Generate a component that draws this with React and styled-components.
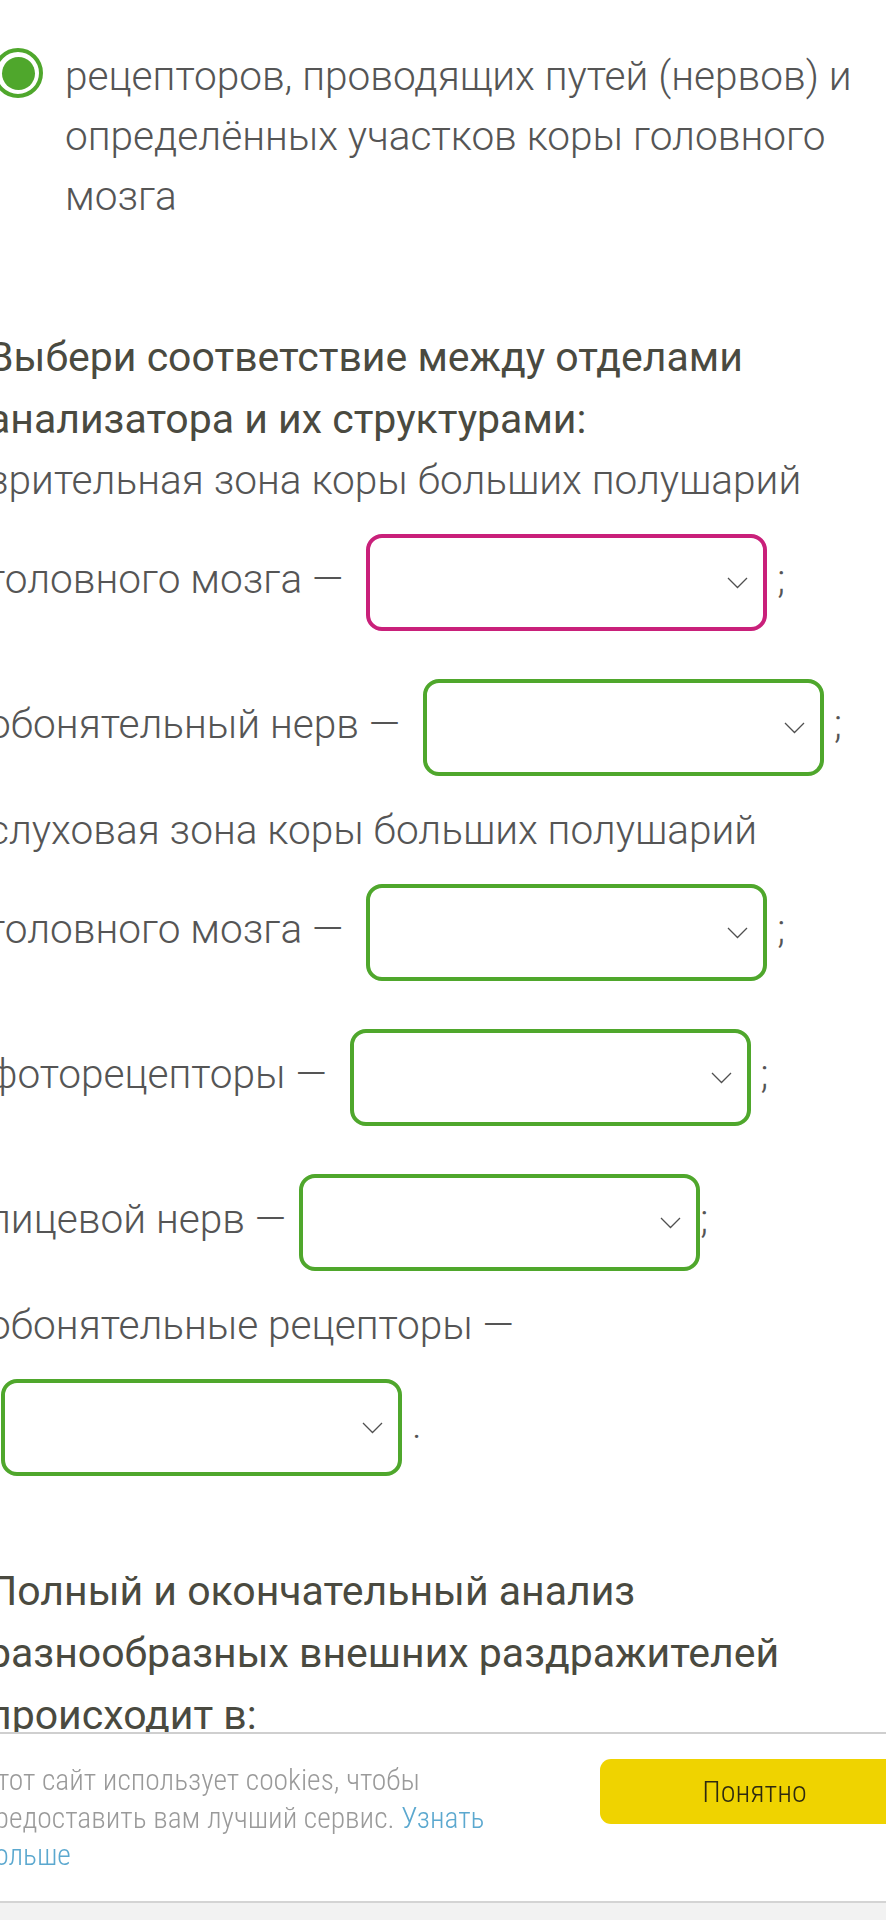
import React from "react";
import styled, { createGlobalStyle } from "styled-components";

const GlobalStyle = createGlobalStyle`
  html, body {
    margin: 0;
    padding: 0;
    background: #ffffff;
    overflow: hidden;
  }
  body {
    font-family: Roboto, "Liberation Sans", sans-serif;
    -webkit-font-smoothing: antialiased;
  }
`;

const Page = styled.main`
  width: 902px;
  margin-left: -12px;
  padding-top: 46px;
  color: #555555;
`;

const Option = styled.div`
  display: flex;
  align-items: flex-start;
  gap: 22px;
`;

const Radio = styled.span`
  flex: none;
  box-sizing: border-box;
  width: 50px;
  height: 50px;
  margin: 2px 0 0 5px;
  border: 4px solid #4fa72c;
  border-radius: 50%;
  background: #ffffff;
  display: flex;
  align-items: center;
  justify-content: center;

  &::after {
    content: "";
    width: 33px;
    height: 33px;
    border-radius: 50%;
    background: #4fa72c;
  }
`;

const OptionText = styled.p`
  margin: 0;
  font-size: 40.6px;
  font-weight: 300;
  line-height: 60px;
`;

const Question = styled.section`
  margin-top: ${(p) => p.$gap}px;
`;

const Title = styled.h2`
  margin: 0;
  font-size: 41px;
  font-weight: 400;
  line-height: 62px;
  color: #4a4a40;
`;

const Body = styled.p`
  margin: 0;
  font-size: 40.6px;
  font-weight: 300;
  line-height: 60px;
`;

const Box = styled.span`
  display: inline-flex;
  align-items: center;
  justify-content: flex-end;
  box-sizing: border-box;
  width: 401px;
  height: 97px;
  margin: 24px 0 24px 13px;
  padding-right: 15px;
  vertical-align: middle;
  border: 4px solid ${(p) => (p.$state === "wrong" ? "#c9207a" : "#4fa72c")};
  border-radius: 16px;
  background: #ffffff;
`;

const Chevron = () => (
  <svg width="21" height="12" viewBox="0 0 21 12" fill="none">
    <polyline points="1,1 10.5,10.5 20,1" stroke="#505050" strokeWidth="1.3" />
  </svg>
);

const Select = ({ state }) => (
  <Box $state={state} role="combobox" aria-expanded="false">
    <Chevron />
  </Box>
);

const CookieDock = styled.footer`
  position: fixed;
  left: 0;
  right: 0;
  bottom: 0;
  background: #f2f2f2;
  padding-bottom: 17px;
  font-stretch: condensed;
`;

const CookieBar = styled.div`
  display: flex;
  align-items: flex-start;
  justify-content: space-between;
  box-sizing: border-box;
  height: 171px;
  margin: 0 -23px 0 -20px;
  padding: 25px 0 0 0;
  background: #ffffff;
  border-top: 2px solid #cfcfcf;
  border-bottom: 2px solid #d4d4d4;
`;

const CookieText = styled.p`
  margin: 3px 0 0 0;
  width: 560px;
  font-size: 29.5px;
  font-weight: 300;
  line-height: 37.5px;
  color: #9a9a9a;
`;

const CookieLink = styled.a`
  color: #5ba8cf;
  text-decoration: none;
`;

const OkButton = styled.button`
  flex: none;
  width: 309px;
  height: 65px;
  border: none;
  border-radius: 11px;
  background: #efd300;
  font-family: inherit;
  font-stretch: condensed;
  font-size: 30px;
  font-weight: 300;
  color: #2e2a10;
  cursor: pointer;
`;

export default function App() {
  return (
    <>
      <GlobalStyle />
      <Page>
        <Option>
          <Radio />
          <OptionText>
            рецепторов, проводящих путей (нервов) и определённых участков коры
            головного мозга
          </OptionText>
        </Option>

        <Question $gap={100}>
          <Title>Выбери соответствие между отделами анализатора и их структурами:</Title>
          <Body>
            зрительная зона коры больших полушарий головного мозга —{" "}
            <Select state="wrong" /> ;
            <br />
            обонятельный нерв — <Select /> ;
            <br />
            слуховая зона коры больших полушарий головного мозга — <Select /> ;
            <br />
            фоторецепторы — <Select /> ;
            <br />
            лицевой нерв —<Select />;
            <br />
            обонятельные рецепторы — <Select /> .
          </Body>
        </Question>

        <Question $gap={60}>
          <Title>
            Полный и окончательный анализ разнообразных внешних раздражителей
            происходит в:
          </Title>
        </Question>
      </Page>

      <CookieDock>
        <CookieBar>
          <CookieText>
            Этот сайт использует cookies, чтобы предоставить вам лучший сервис.{" "}
            <CookieLink href="#cookies">Узнать больше</CookieLink>
          </CookieText>
          <OkButton type="button">Понятно</OkButton>
        </CookieBar>
      </CookieDock>
    </>
  );
}
